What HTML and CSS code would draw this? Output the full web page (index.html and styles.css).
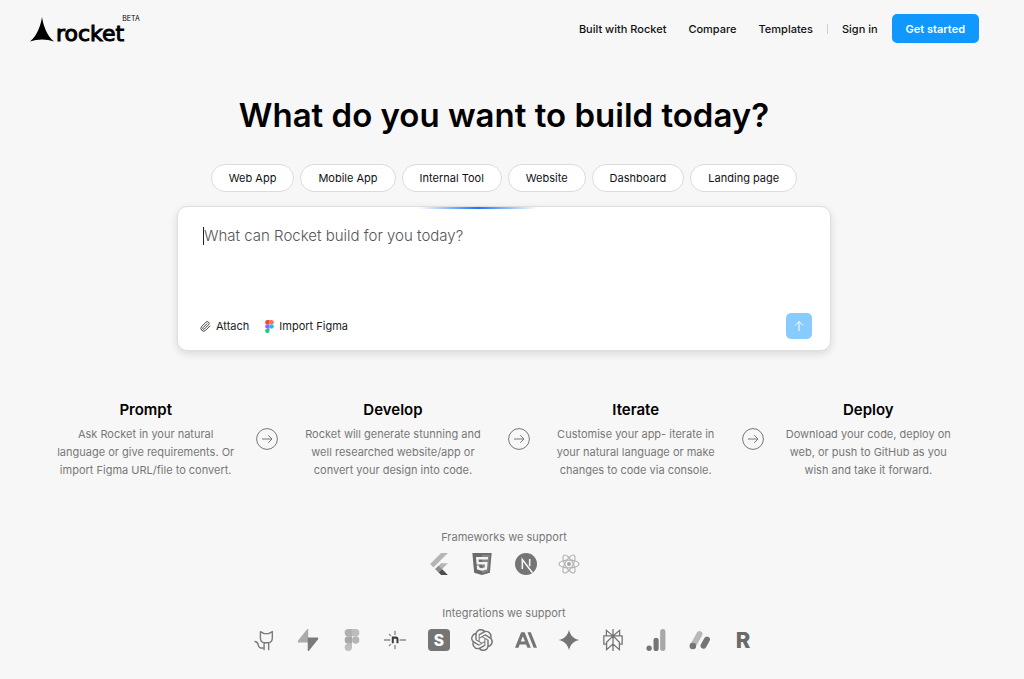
FILE: index.html
```html
<!DOCTYPE html>
<html lang="en">
<head>
  <meta charset="UTF-8" />
  <meta name="viewport" content="width=device-width, initial-scale=1" />
  <title>Rocket</title>
  <link rel="stylesheet" href="styles.css">
</head>
<body>

<header class="topbar">
  <a class="logo" href="#">
    <svg class="logo-mark" viewBox="0 0 24 25" aria-hidden="true"><path d="M12 0C13 7 16.500 18.500 24 24.500C16.500 21.800 7.500 21.800 0 24.500C7.500 18.500 11 7 12 0Z"/></svg>
    <span class="logo-name">rocket</span>
    <span class="logo-tag">BETA</span>
  </a>
  <nav class="nav">
    <a href="#">Built with Rocket</a>
    <a href="#">Compare</a>
    <a href="#">Templates</a>
    <span class="nav-line"></span>
    <a href="#">Sign in</a>
    <button class="start-btn" type="button">Get started</button>
  </nav>
</header>

<main>
  <h1>What do you want to build today?</h1>

  <div class="pills">
    <button type="button">Web App</button>
    <button type="button">Mobile App</button>
    <button type="button">Internal Tool</button>
    <button type="button">Website</button>
    <button type="button">Dashboard</button>
    <button type="button">Landing page</button>
  </div>

  <form class="prompt">
    <div class="prompt-field">
      <span class="caret"></span>
      <textarea aria-label="Prompt" placeholder="What can Rocket build for you today?"></textarea>
    </div>
    <div class="prompt-bar">
      <button class="tool" type="button">
        <svg class="clip" viewBox="0 0 24 24" aria-hidden="true"><path d="M21.400 11.100 12.300 20.300a6 6 0 0 1-8.500-8.500l9.200-9.200a4 4 0 0 1 5.700 5.700l-9.200 9.200a2 2 0 0 1-2.900-2.900l8.500-8.500"/></svg>
        Attach
      </button>
      <button class="tool" type="button">
        <svg class="figma" viewBox="0 0 16 24" aria-hidden="true">
          <path fill="#f24e1e" d="M8 0H4a4 4 0 0 0 0 8h4z"/>
          <path fill="#ff7262" d="M8 0h4a4 4 0 0 1 0 8H8z"/>
          <path fill="#a259ff" d="M8 8H4a4 4 0 0 0 0 8h4z"/>
          <circle fill="#1abcfe" cx="12" cy="12" r="4"/>
          <path fill="#0acf83" d="M8 16H4a4 4 0 1 0 4 4z"/>
        </svg>
        Import Figma
      </button>
      <button class="send" type="submit" aria-label="Send">
        <svg viewBox="0 0 12 12" aria-hidden="true"><path d="M6 11V1.500M2 5.500l4-4 4 4"/></svg>
      </button>
    </div>
  </form>

  <section class="steps">
    <div class="step">
      <h2>Prompt</h2>
      <p>Ask Rocket in your natural<br>language or give requirements. Or<br>import Figma URL/file to convert.</p>
    </div>
    <svg class="arrow" viewBox="0 0 22 22" aria-hidden="true"><circle cx="11" cy="11" r="10.400"/><path d="M6 11h10M12.200 7.200 16 11l-3.800 3.800"/></svg>
    <div class="step step-mid">
      <h2>Develop</h2>
      <p>Rocket will generate stunning and<br>well researched website/app or<br>convert your design into code.</p>
    </div>
    <svg class="arrow" viewBox="0 0 22 22" aria-hidden="true"><circle cx="11" cy="11" r="10.400"/><path d="M6 11h10M12.200 7.200 16 11l-3.800 3.800"/></svg>
    <div class="step step-mid">
      <h2>Iterate</h2>
      <p>Customise your app- iterate in<br>your natural language or make<br>changes to code via console.</p>
    </div>
    <svg class="arrow" viewBox="0 0 22 22" aria-hidden="true"><circle cx="11" cy="11" r="10.400"/><path d="M6 11h10M12.200 7.200 16 11l-3.800 3.800"/></svg>
    <div class="step">
      <h2>Deploy</h2>
      <p>Download your code, deploy on<br>web, or push to GitHub as you<br>wish and take it forward.</p>
    </div>
  </section>

  <!-- Frameworks -->
  <section class="support">
    <p>Frameworks we support</p>
    <div class="icons icons-short">
      <svg viewBox="0 0 24 24" role="img" aria-label="Flutter">
        <path fill="#b5b5b5" d="M14.314 0 2.300 12 6 15.700 21.684.013z"/>
        <path fill="#b5b5b5" d="M14.328 11.072 7.857 17.530 11.550 21.220 21.700 11.072z"/>
        <path fill="#4d4d4d" d="M11.550 21.220 14.327 24H21.700l-6.460-6.468z"/>
        <path fill="#8c8c8c" d="M7.857 17.530 11.550 13.840 15.240 17.530 11.550 21.220z"/>
      </svg>
      <svg viewBox="0 0 24 24" role="img" aria-label="HTML5">
        <path fill="#6a6a6a" d="M1.500 0h21l-1.910 21.563L11.977 24l-8.564-2.438z"/>
        <path fill="#858585" d="M12 1.800h8.600l-1.630 18.400L12 22.200z"/>
        <path fill="#f2f2f2" d="M8.531 9.750 8.299 7.032l10.059.003.230-2.622L5.412 4.410l.698 8.010h9.126l-.326 3.426-2.910.804-2.955-.810-.188-2.110H6.248l.330 4.171L12 19.351l5.379-1.443.744-8.157z"/>
      </svg>
      <svg viewBox="0 0 24 24" role="img" aria-label="Next.js">
        <circle fill="#757575" cx="12" cy="12" r="12"/>
        <path fill="none" stroke="#f7f7f7" stroke-width="1.700" d="M8 17.500V7.200L19 21.500M16 6.500v8"/>
      </svg>
      <svg viewBox="0 0 24 24" role="img" aria-label="React">
        <g fill="none" stroke="#b4b4b4" stroke-width="1.300">
          <ellipse cx="12" cy="12" rx="11" ry="4.300"/>
          <ellipse cx="12" cy="12" rx="11" ry="4.300" transform="rotate(60 12 12)"/>
          <ellipse cx="12" cy="12" rx="11" ry="4.300" transform="rotate(120 12 12)"/>
        </g>
        <circle fill="#a5a5a5" cx="12" cy="12" r="2.200"/>
      </svg>
    </div>
  </section>

  <!-- Integrations -->
  <section class="support">
    <p>Integrations we support</p>
    <div class="icons">
      <svg viewBox="0 0 24 24" role="img" aria-label="GitHub">
        <path fill="none" stroke="#7a7a7a" stroke-width="1.500" stroke-linejoin="round" stroke-linecap="round" d="M11 22.500V15C8 14.500 7 12.500 7 9.500V2.800l4 2.200h5l4-2.200v6.700c0 3-1 5-4 5.500v7.500M11 15h5M11 20.500c-4 1-6-.500-6.500-3.500C4.200 14.700 3 14 1.200 13.600"/>
      </svg>
      <svg viewBox="0 0 24 24" role="img" aria-label="Supabase">
        <path fill="#ababab" d="M12.300.600v14.200H2.200c-1.500 0-1.800-1.300-1-2.300L11 .400c.500-.600 1.300-.400 1.300.200z"/>
        <path fill="#7a7a7a" d="M11.700 23.400V9.200h10.100c1.500 0 1.800 1.300 1 2.300L13 23.600c-.500.600-1.300.400-1.300-.200z"/>
      </svg>
      <svg viewBox="0 0 24 24" role="img" aria-label="Figma">
        <path fill="#b0b0b0" d="M12 0H8a4 4 0 0 0 0 8h4z"/>
        <path fill="#bdbdbd" d="M12 0h4a4 4 0 0 1 0 8h-4z"/>
        <path fill="#a8a8a8" d="M12 8H8a4 4 0 0 0 0 8h4z"/>
        <circle fill="#b5b5b5" cx="16" cy="12" r="4"/>
        <path fill="#bfbfbf" d="M12 16H8a4 4 0 1 0 4 4z"/>
      </svg>
      <svg viewBox="0 0 24 24" role="img" aria-label="Netlify">
        <path fill="none" stroke="#8a8a8a" stroke-width="1.500" d="M0 12h7M17 12h7M12 2v4.500M12 17.500V22M5.500 5.500l2 2M5.500 18.500l2-2"/>
        <path fill="none" stroke="#3d3d3d" stroke-width="2.200" d="M9.600 15.500V9.400h3.400q1.700 0 1.700 1.800v4.300"/>
      </svg>
      <svg viewBox="0 0 24 24" role="img" aria-label="Stripe">
        <rect fill="#757575" width="24" height="24" rx="4"/>
        <text class="mark-s" x="12" y="18" text-anchor="middle">S</text>
      </svg>
      <svg viewBox="0 0 24 24" role="img" aria-label="OpenAI">
        <path fill="#757575" d="M22.2819 9.8211a5.9847 5.9847 0 0 0-.5157-4.9108 6.0462 6.0462 0 0 0-6.5098-2.9A6.0651 6.0651 0 0 0 4.9807 4.1818a5.9847 5.9847 0 0 0-3.9977 2.9 6.0462 6.0462 0 0 0 .7427 7.0966 5.98 5.98 0 0 0 .511 4.9107 6.051 6.051 0 0 0 6.5146 2.9001A5.9847 5.9847 0 0 0 13.2599 24a6.0557 6.0557 0 0 0 5.7718-4.2058 5.9894 5.9894 0 0 0 3.9977-2.9001 6.0557 6.0557 0 0 0-.7475-7.0729zm-9.022 12.6081a4.4755 4.4755 0 0 1-2.8764-1.0408l.1419-.0804 4.7783-2.7582a.7948.7948 0 0 0 .3927-.6813v-6.7369l2.02 1.1686a.071.071 0 0 1 .038.052v5.5826a4.504 4.504 0 0 1-4.4945 4.4944zm-9.6607-4.1254a4.4708 4.4708 0 0 1-.5346-3.0137l.142.0852 4.783 2.7582a.7712.7712 0 0 0 .7806 0l5.8428-3.3685v2.3324a.0804.0804 0 0 1-.0332.0615L9.74 19.9502a4.4992 4.4992 0 0 1-6.1408-1.6464zM2.3408 7.8956a4.485 4.485 0 0 1 2.3655-1.9728V11.6a.7664.7664 0 0 0 .3879.6765l5.8144 3.3543-2.0201 1.1685a.0757.0757 0 0 1-.071 0l-4.8303-2.7865A4.504 4.504 0 0 1 2.3408 7.872zm16.5963 3.8558L13.1038 8.364 15.1192 7.2a.0757.0757 0 0 1 .071 0l4.8303 2.7913a4.4944 4.4944 0 0 1-.6765 8.1042v-5.6772a.79.79 0 0 0-.407-.667zm2.0107-3.0231l-.142-.0852-4.7735-2.7818a.7759.7759 0 0 0-.7854 0L9.409 9.2297V6.8974a.0662.0662 0 0 1 .0284-.0615l4.8303-2.7866a4.4992 4.4992 0 0 1 6.6802 4.66zM8.3065 12.863l-2.02-1.1638a.0804.0804 0 0 1-.038-.0567V6.0742a4.4992 4.4992 0 0 1 7.3757-3.4537l-.142.0805L8.704 5.459a.7948.7948 0 0 0-.3927.6813zm1.0976-2.3654l2.602-1.4998 2.6069 1.4998v2.9994l-2.5974 1.4997-2.6067-1.4997Z"/>
      </svg>
      <svg viewBox="0 0 24 24" role="img" aria-label="Anthropic">
        <path fill="#757575" d="M17.304 3.541h-3.672l6.696 16.918H24zm-10.608 0L0 20.459h3.744l1.370-3.553h7.005l1.369 3.553h3.744L10.536 3.541zm-.371 10.223 2.291-5.946 2.292 5.946z"/>
      </svg>
      <svg viewBox="0 0 24 24" role="img" aria-label="Gemini">
        <path fill="#757575" d="M12 .800C13.300 7 17 10.700 23.200 12 17 13.300 13.300 17 12 23.200 10.700 17 7 13.300.800 12 7 10.700 10.700 7 12 .800z"/>
      </svg>
      <svg viewBox="0 0 24 24" role="img" aria-label="Perplexity">
        <path fill="none" stroke="#757575" stroke-width="1.400" d="M12 0v24M12 7.500 4.800 1.500v6H19.200v-6zM12 7.500H2v9h3M12 7.500h10v9h-3M12 7.500 5 14.500v8l7-6.200V7.500l7 7v8l-7-6.200"/>
      </svg>
      <svg viewBox="0 0 24 24" role="img" aria-label="Google Analytics">
        <circle fill="#757575" cx="4.500" cy="21" r="2.900"/>
        <rect fill="#757575" x="9.300" y="9.500" width="5.600" height="14.500" rx="2.800"/>
        <rect fill="#a8a8a8" x="16.500" y="0" width="5.800" height="24" rx="2.900"/>
      </svg>
      <svg viewBox="0 0 24 24" role="img" aria-label="Google AdSense">
        <path fill="none" stroke="#b8b8b8" stroke-width="6.400" stroke-linecap="round" d="M4.400 18.200 11.500 5.500"/>
        <path fill="none" stroke="#757575" stroke-width="6.400" stroke-linecap="round" d="M15.800 18.200 19.600 11.500"/>
        <circle fill="#757575" cx="4.200" cy="18.500" r="3.600"/>
      </svg>
      <svg viewBox="0 0 24 24" role="img" aria-label="Resend">
        <text class="mark-r" x="12" y="21" text-anchor="middle">R</text>
      </svg>
    </div>
  </section>
</main>

</body>
</html>
```
FILE: styles.css
```css
* {
  box-sizing: border-box;
}
body {
  margin: 0;
  padding-right: 16px;
  font-family: Inter, "Liberation Sans", sans-serif;
  background: #f7f7f7;
  color: #000;
}
button {
  font-family: inherit;
  cursor: pointer;
}

/* Header */
.topbar {
  display: flex;
  justify-content: space-between;
  align-items: center;
  padding: 14px 29px 0 30px;
}
.logo {
  display: flex;
  align-items: flex-end;
  height: 27px;
  color: #000;
  text-decoration: none;
}
.logo-mark {
  width: 24px;
  height: 25px;
}
.logo-name {
  margin-left: 2px;
  font-family: "DejaVu Sans", sans-serif;
  font-size: 22px;
  line-height: 16px;
  -webkit-text-stroke: 1px #000;
}
.logo-tag {
  align-self: flex-start;
  margin-left: -2px;
  font-size: 7px;
  line-height: 8px;
}
.nav {
  display: flex;
  align-items: center;
  gap: 22px;
}
.nav a {
  color: #111;
  font-size: 11px;
  font-weight: 500;
  text-decoration: none;
}
.nav-line {
  width: 1px;
  height: 10px;
  margin: 0 -8px;
  background: #d0d0d0;
}
.start-btn {
  height: 29px;
  margin-left: -8px;
  padding: 0 14px;
  border: none;
  border-radius: 5px;
  background: #1198ff;
  color: #fff;
  font-size: 11px;
  font-weight: 600;
}

/* Hero */
main {
  display: flex;
  flex-direction: column;
  align-items: center;
}
h1 {
  margin: 51px 0 28px;
  font-size: 33px;
  line-height: 42px;
  font-weight: 600;
  text-align: center;
}
.pills {
  display: flex;
  flex-wrap: wrap;
  justify-content: center;
  gap: 6px;
}
.pills button {
  height: 28px;
  padding: 0 17px;
  border: 1px solid #dcdcdc;
  border-radius: 14px;
  background: #fff;
  color: #111;
  font-size: 11px;
  font-weight: 400;
}

/* Prompt box */
.prompt {
  position: relative;
  width: 100%;
  max-width: 654px;
  margin-top: 14px;
  padding: 18px 18px 11px 22px;
  border: 1px solid #dedede;
  border-radius: 10px;
  background: #fff;
  box-shadow: 0 3px 8px rgba(0, 0, 0, .12);
}
.prompt::before {
  content: "";
  position: absolute;
  top: 0;
  left: 37%;
  width: 18%;
  height: 2px;
  background: linear-gradient(to right, transparent, #1a73ff, transparent);
}
.prompt-field {
  display: flex;
  padding-left: 3px;
}
.caret {
  width: 1px;
  height: 18px;
  margin-top: 2px;
  background: #222;
}
.prompt textarea {
  flex: 1;
  height: 88px;
  padding: 0;
  border: none;
  outline: none;
  resize: none;
  background: transparent;
  font-family: inherit;
  font-size: 15px;
  font-weight: 300;
  line-height: 22px;
}
.prompt textarea::placeholder {
  color: #555;
}
.prompt-bar {
  display: flex;
  align-items: center;
  gap: 16px;
}
.tool {
  display: flex;
  align-items: center;
  gap: 5px;
  padding: 0;
  border: none;
  background: none;
  color: #222;
  font-size: 11px;
  font-weight: 400;
}
.clip {
  width: 11px;
  height: 11px;
  fill: none;
  stroke: #333;
  stroke-width: 2;
  stroke-linecap: round;
}
.figma {
  width: 9px;
  height: 13px;
}
.send {
  display: flex;
  align-items: center;
  justify-content: center;
  width: 26px;
  height: 26px;
  margin-left: auto;
  border: none;
  border-radius: 5px;
  background: #88cbff;
}
.send svg {
  flex: none;
  width: 12px;
  height: 12px;
  fill: none;
  stroke: #fff;
  stroke-width: 1;
}

/* Steps */
.steps {
  display: flex;
  justify-content: center;
  gap: 22px;
  margin-top: 49px;
}
.step {
  text-align: center;
}
.step-mid {
  padding: 0 5px;
}
.step h2 {
  margin: 0 0 5px;
  font-size: 15px;
  line-height: 20px;
  font-weight: 600;
}
.step p {
  margin: 0;
  color: #777;
  font-size: 11px;
  line-height: 18px;
}
.arrow {
  flex: none;
  width: 22px;
  height: 22px;
  margin-top: 28px;
  fill: none;
  stroke: #777;
  stroke-width: 1;
}

/* Supported tools */
.support {
  display: flex;
  flex-direction: column;
  align-items: center;
  width: 100%;
  margin-top: 49px;
}
.support + .support {
  margin-top: 29px;
}
.support p {
  margin: 0 0 7px;
  color: #777;
  font-size: 11px;
  line-height: 18px;
}
.icons {
  display: flex;
  justify-content: space-between;
  width: 100%;
  max-width: 500px;
}
.icons-short {
  max-width: 152px;
}
.icons svg {
  width: 22px;
  height: 22px;
  overflow: visible;
}
.mark-s {
  fill: #fff;
  font-size: 17px;
  font-weight: 800;
}
.mark-r {
  fill: #6a6a6a;
  font-size: 24px;
  font-weight: 800;
}
```
